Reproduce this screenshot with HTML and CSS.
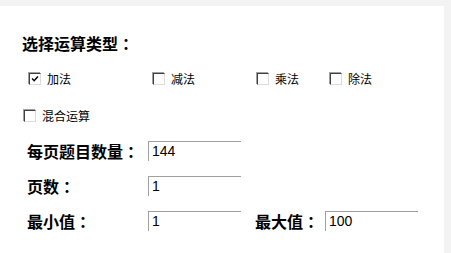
FILE: index.html
```html
<!DOCTYPE html>
<html>
<head>
<meta charset="utf-8">
<link rel="stylesheet" href="styles.css">
</head>
<body>
<div class="panel">
  <div class="title">选择运算类型<span class="colon">：</span></div>
  <div class="ops ops-main">
    <label class="op w1"><span class="cb checked"><svg viewBox="0 0 12 12" width="12" height="12"><path d="M2.5 5.5 L5 8 L9.5 3" fill="none" stroke="#000" stroke-width="1.8"/></svg></span>加法</label>
    <label class="op w2"><span class="cb"></span>减法</label>
    <label class="op w3"><span class="cb"></span>乘法</label>
    <label class="op"><span class="cb"></span>除法</label>
  </div>
  <div class="ops ops-mix">
    <label class="op"><span class="cb"></span>混合运算</label>
  </div>
  <div class="form">
    <div class="frow">
      <span class="lbl">每页题目数量<span class="colon">：</span></span>
      <span class="inp">144</span>
    </div>
    <div class="frow">
      <span class="lbl">页数<span class="colon">：</span></span>
      <span class="inp">1</span>
    </div>
    <div class="frow">
      <span class="lbl">最小值<span class="colon">：</span></span>
      <span class="inp">1</span>
      <span class="lbl lbl2">最大值<span class="colon">：</span></span>
      <span class="inp">100</span>
    </div>
  </div>
</div>
</body>
</html>
```
FILE: styles.css
```css
html, body {
  margin: 0;
  padding: 0;
  background: #f3f3f3;
  height: 253px;
  overflow: hidden;
}
.panel {
  margin-top: 6px;
  width: 444px;
  height: 247px;
  background: #ffffff;
  box-sizing: border-box;
  padding: 27px 0 0 22px;
  font-family: "Noto Sans CJK SC", sans-serif;
  color: #000;
}
.title {
  height: 20px;
  line-height: 20px;
  font-size: 16px;
  font-weight: bold;
}
.colon {
  font-family: "Noto Sans CJK TC", sans-serif;
}
.ops {
  display: flex;
  align-items: center;
  height: 14px;
  font-size: 12px;
}
.ops-main {
  margin-top: 19px;
  padding-left: 7px;
}
.ops-mix {
  margin-top: 23px;
  padding-left: 2px;
}
.op {
  display: flex;
  align-items: center;
  gap: 6px;
  line-height: 14px;
}
.w1 { width: 124px; }
.w2 { width: 104px; }
.w3 { width: 73px; }
.cb {
  width: 12px;
  height: 12px;
  box-sizing: border-box;
  border-top: 1px solid #404040;
  border-left: 1px solid #404040;
  border-right: 1px solid #dcdcdc;
  border-bottom: 1px solid #dcdcdc;
  box-shadow: -1px -1px 0 #a0a0a0;
  background: #fff;
  display: flex;
  align-items: center;
  justify-content: center;
}
.cb svg { display: block; }
.form {
  margin-top: 18px;
  padding-left: 5px;
  display: flex;
  flex-direction: column;
  gap: 15px;
}
.frow {
  display: flex;
  align-items: center;
  height: 20px;
}
.lbl {
  width: 121px;
  font-size: 16px;
  font-weight: bold;
  line-height: 20px;
  white-space: nowrap;
}
.lbl2 {
  width: 70px;
  margin-left: 14px;
}
.inp {
  width: 93px;
  height: 20px;
  box-sizing: border-box;
  border-top: 1px solid #a0a0a0;
  border-left: 1px solid #a0a0a0;
  padding-left: 3px;
  font-family: "Liberation Sans", Arial, sans-serif;
  font-size: 14px;
  line-height: 19px;
}
```
